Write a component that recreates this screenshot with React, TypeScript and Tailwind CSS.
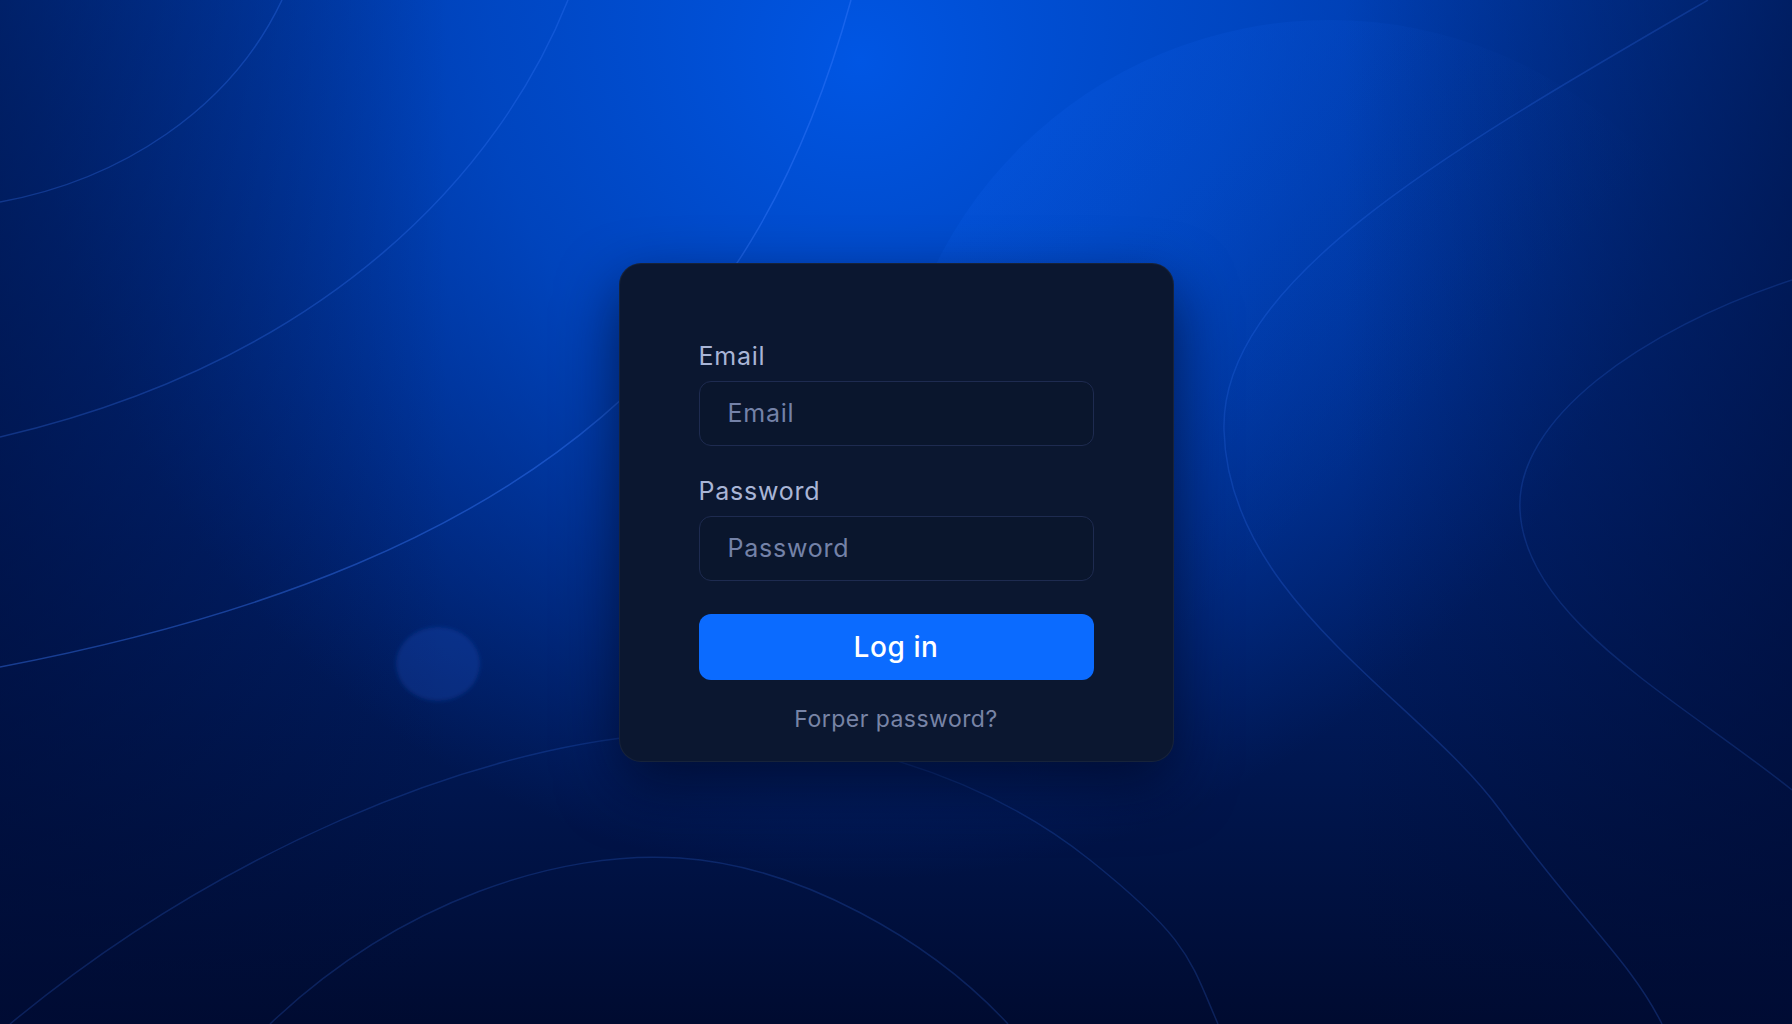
import React from 'react';

function Backdrop() {
  return (
    <svg
      className="absolute inset-0 h-full w-full"
      viewBox="0 0 1792 1024"
      preserveAspectRatio="none"
      aria-hidden="true"
    >
      <defs>
        <linearGradient id="base" x1="0" y1="0" x2="0" y2="1">
          <stop offset="0" stopColor="#003aa8" />
          <stop offset="0.5" stopColor="#002270" />
          <stop offset="1" stopColor="#000b30" />
        </linearGradient>
        <radialGradient id="glow" cx="860" cy="60" r="820" gradientUnits="userSpaceOnUse">
          <stop offset="0" stopColor="#0056e4" stopOpacity="1" />
          <stop offset="0.45" stopColor="#004bcc" stopOpacity="0.75" />
          <stop offset="1" stopColor="#003cb0" stopOpacity="0" />
        </radialGradient>
        <linearGradient id="edges" x1="0" y1="0" x2="1" y2="0">
          <stop offset="0" stopColor="#000c36" stopOpacity="0.55" />
          <stop offset="0.25" stopColor="#000c36" stopOpacity="0" />
          <stop offset="0.75" stopColor="#000c36" stopOpacity="0" />
          <stop offset="1" stopColor="#000c36" stopOpacity="0.6" />
        </linearGradient>
        <linearGradient id="orb" x1="0.1" y1="0.05" x2="0.55" y2="0.5">
          <stop offset="0" stopColor="#1262f0" stopOpacity="0.22" />
          <stop offset="0.6" stopColor="#1262f0" stopOpacity="0.05" />
          <stop offset="1" stopColor="#1262f0" stopOpacity="0" />
        </linearGradient>
        <filter id="soft" x="-50%" y="-50%" width="200%" height="200%">
          <feGaussianBlur stdDeviation="2" />
        </filter>
      </defs>

      <rect width="1792" height="1024" fill="url(#base)" />
      <rect width="1792" height="1024" fill="url(#glow)" />
      <circle cx="1330" cy="460" r="440" fill="url(#orb)" />
      <rect width="1792" height="1024" fill="url(#edges)" />

      <g fill="none" stroke="#3d7dff" strokeOpacity="0.28" strokeWidth="1.5">
        <path d="M282 0 C 230 110, 120 180, 0 202" />
        <path d="M568 0 C 500 170, 330 360, 0 437" />
        <path d="M851 0 C 760 330, 560 560, 0 667" strokeOpacity="0.4" />
        <path d="M10 1024 C 220 850, 470 750, 650 735 S 990 780, 1090 860 S 1190 960, 1218 1024" strokeOpacity="0.2" />
        <path d="M270 1024 C 400 900, 560 850, 680 858 C 800 866, 930 940, 1008 1024" strokeOpacity="0.2" />
        <path d="M1708 0 C 1450 150, 1220 280, 1224 430 C 1228 600, 1420 700, 1500 810 S 1630 960, 1662 1024" strokeOpacity="0.22" />
        <path d="M1792 280 C 1640 330, 1515 420, 1520 510 C 1525 620, 1680 700, 1792 790" strokeOpacity="0.18" />
      </g>

      <ellipse cx="438" cy="664" rx="42" ry="37" fill="#1a4fc0" fillOpacity="0.3" filter="url(#soft)" />
    </svg>
  );
}

function Field({ label, type }: { label: string; type: string }) {
  return (
    <div className="flex flex-col gap-[10px]">
      <label className="text-[25px] leading-[30px] tracking-[0.03em] text-[#a9b5d6]">{label}</label>
      <input
        type={type}
        placeholder={label}
        className="h-[65px] w-full rounded-[12px] border border-[#1e2b50] bg-[#0a162d] pl-7 pr-4 text-[25px] tracking-[0.03em] text-[#c8d2ee] placeholder:text-[#7482a8] outline-none"
      />
    </div>
  );
}

export default function App() {
  return (
    <div
      className="relative flex h-screen min-h-[1024px] w-full items-center justify-center overflow-hidden bg-[#001a5c]"
      style={{ fontFamily: 'Inter, "Noto Sans", "Liberation Sans", sans-serif' }}
    >
      <Backdrop />

      <div className="relative z-10 flex w-[555px] flex-col rounded-[22px] border border-white/5 bg-[#0b1730] px-[79px] pt-[77px] pb-[28px] shadow-[0_24px_60px_rgba(0,6,30,0.65)]">
        <Field label="Email" type="email" />
        <div className="mt-[30px]">
          <Field label="Password" type="password" />
        </div>

        <button className="mt-[33px] h-[66px] w-full rounded-[12px] bg-[#0b6bff] text-[28px] font-medium tracking-[0.02em] text-white">
          Log in
        </button>

        <a className="mt-[25px] text-center text-[23px] leading-[28px] tracking-[0.02em] text-[#7884a6]">
          Forper password?
        </a>
      </div>
    </div>
  );
}
